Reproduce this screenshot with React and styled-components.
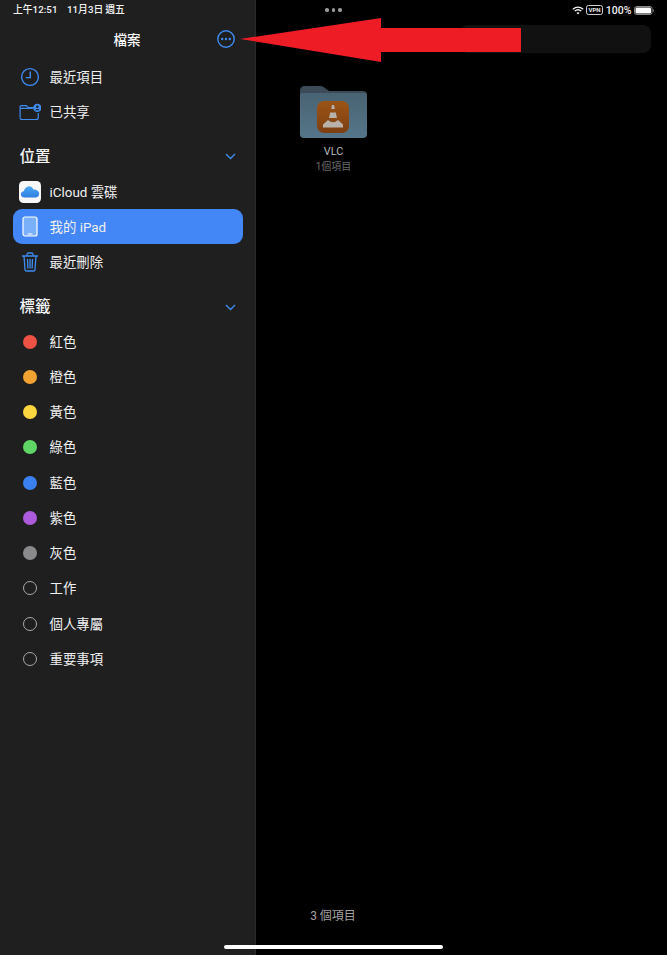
import React from "react";
import styled, { createGlobalStyle } from "styled-components";

const Global = createGlobalStyle`
  html, body { margin: 0; padding: 0; background: #000; }
  * { box-sizing: border-box; }
  body { font-family: Roboto, "Noto Sans CJK TC", sans-serif; color: #fff; }
`;

const Screen = styled.div`
  position: relative;
  width: 667px;
  height: 955px;
  display: grid;
  grid-template-columns: 256px 1fr;
  overflow: hidden;
  background: #000;
`;

const Sidebar = styled.aside`
  background: #1f1f20;
  border-right: 1px solid #2a2a2a;
  display: flex;
  flex-direction: column;
  padding-top: 3px;
`;

const StatusLeft = styled.div`
  height: 14px;
  padding-left: 13px;
  display: flex;
  font-size: 9.8px;
  line-height: 14px;
  font-weight: 500;
  color: #f2f2f2;
  white-space: nowrap;
`;

const StatusItem = styled.span`
  margin-left: ${(p) => p.$gap || 0}px;
`;

const NavBar = styled.div`
  position: relative;
  height: 40px;
  margin-top: 2px;
  display: flex;
  align-items: center;
  justify-content: center;
`;

const NavTitle = styled.div`
  font-size: 13.5px;
  font-weight: 500;
  color: #f5f5f5;
  margin-left: -1px;
`;

const MoreButton = styled.div`
  position: absolute;
  left: 217px;
  top: 11px;
  width: 18px;
  height: 18px;
  display: flex;
`;

const List = styled.div`
  display: flex;
  flex-direction: column;
`;

const Row = styled.div`
  height: 35.25px;
  margin: 0 12px 0 13px;
  padding-left: 6px;
  display: flex;
  align-items: center;
  gap: 8.6px;
  font-size: 13.4px;
  color: #f0f0f0;
  border-radius: 9px;
  background: ${(p) => (p.$active ? "#4287f5" : "transparent")};
`;

const RowLabel = styled.span`
  margin-top: -2px;
`;

const IconSlot = styled.span`
  width: 22px;
  height: 24px;
  flex: none;
  display: flex;
  align-items: center;
  justify-content: center;
`;

const Section = styled.div`
  height: 36px;
  margin: 8.4px 19px 0 20px;
  display: flex;
  align-items: center;
  justify-content: space-between;
  font-size: 15.5px;
  font-weight: 500;
  color: #f5f5f5;
`;

const SectionLabel = styled.span`
  margin-top: -2px;
  margin-left: -0.5px;
`;

const ChevronMark = styled.svg`
  margin-top: 2px;
`;

const Dot = styled.span`
  width: 14px;
  height: 14px;
  border-radius: 50%;
  background: ${(p) => p.$color || "transparent"};
  border: ${(p) => (p.$color ? "none" : "1px solid #a8a8a8")};
`;

const Main = styled.main`
  position: relative;
  display: flex;
  flex-direction: column;
  padding-top: 3px;
`;

const StatusRight = styled.div`
  height: 14px;
  display: flex;
  align-items: center;
  padding-left: 69px;
  padding-right: 13px;
`;

const Dots = styled.div`
  display: flex;
  gap: 3px;
  span {
    width: 3.5px;
    height: 3.5px;
    border-radius: 50%;
    background: #9a9a9a;
  }
`;

const StatusIcons = styled.div`
  margin-left: auto;
  display: flex;
  align-items: center;
  gap: 2.5px;
  font-size: 10.5px;
  font-weight: 500;
  color: #f2f2f2;
`;

const Search = styled.div`
  align-self: flex-end;
  width: 191px;
  height: 28px;
  margin: 8px 16px 0 0;
  background: #111;
  border-radius: 8px;
`;

const FolderCell = styled.div`
  width: 67px;
  margin: 32px 0 0 44px;
  display: flex;
  flex-direction: column;
  align-items: center;
`;

const FolderName = styled.div`
  margin-top: 7px;
  font-size: 10.8px;
  line-height: 14px;
  color: #b8b8b8;
`;

const FolderCount = styled.div`
  font-size: 10px;
  line-height: 15px;
  color: #6a6a6a;
  white-space: nowrap;
`;

const Footer = styled.div`
  margin-top: auto;
  margin-bottom: 31px;
  width: 154px;
  text-align: center;
  font-size: 12px;
  line-height: 16px;
  color: #a0a0a0;
`;

const HomeBar = styled.div`
  position: absolute;
  left: 224px;
  top: 945px;
  width: 219px;
  height: 4px;
  border-radius: 2px;
  background: #fff;
`;

const ArrowMark = styled.svg`
  position: absolute;
  left: 238px;
  top: 16px;
`;

const blue = "#3f8bf0";

const Clock = () => (
  <svg width="20" height="20" viewBox="0 0 20 20" fill="none" stroke={blue} strokeWidth="1.4">
    <circle cx="10" cy="10" r="8.4" />
    <path d="M10.3 4.6V10.6H5.8" />
  </svg>
);

const SharedFolder = () => (
  <svg width="24" height="20" viewBox="0 0 24 20" fill="none">
    <path d="M1.2 16V4.2Q1.2 3 2.4 3H8L10.2 5.2H16" stroke={blue} strokeWidth="1.3" />
    <path d="M1.2 6H15M21 11V16Q21 18.2 19 18.2H3.2Q1.2 18.2 1.2 16" stroke={blue} strokeWidth="1.3" />
    <circle cx="20" cy="5.5" r="4.6" fill={blue} />
    <circle cx="20" cy="4.2" r="1.4" fill="#1f1f20" />
    <path d="M17.4 8.2Q20 5 22.6 8.2Z" fill="#1f1f20" />
  </svg>
);

const ICloud = () => (
  <svg width="24" height="24" viewBox="0 0 24 24">
    <defs>
      <linearGradient id="cloud" x1="0" y1="0" x2="0" y2="1">
        <stop offset="0" stopColor="#4aa8f5" />
        <stop offset="1" stopColor="#2f7fe0" />
      </linearGradient>
    </defs>
    <rect width="24" height="24" rx="5" fill="#f7f7f7" />
    <path
      d="M6 18C3.4 18 2 16.2 2 14.4C2 12.6 3.3 11.2 5.2 11.1C6 8 8.2 5.6 11 5.6C13.2 5.6 15 7 15.8 9.4C19 9.2 22 11.2 22 14C22 16.3 20.2 18 18 18Z"
      fill="url(#cloud)"
    />
  </svg>
);

const Tablet = () => (
  <svg width="16" height="21" viewBox="0 0 16 21">
    <rect x="1" y="1" width="14" height="19" rx="2" fill="#7ab0fa" stroke="#fff" strokeWidth="1.2" />
    <rect x="5.5" y="17.6" width="5" height="1" rx=".5" fill="#fff" />
  </svg>
);

const Trash = () => (
  <svg width="18" height="20" viewBox="0 0 18 20" fill="none" stroke={blue} strokeWidth="1.3">
    <path d="M1 4H17M6 4V2.4Q6 1 7.4 1H10.6Q12 1 12 2.4V4" />
    <path d="M3 4L4 17.6Q4.1 19 5.6 19H12.4Q13.9 19 14 17.6L15 4" />
    <path d="M6.5 7L6.9 16.5M9 7V16.5M11.5 7L11.1 16.5" />
  </svg>
);

const Chevron = () => (
  <ChevronMark width="11" height="7" viewBox="0 0 11 7" fill="none" stroke={blue} strokeWidth="1.4">
    <path d="M1 1L5.5 5.5L10 1" />
  </ChevronMark>
);

const Wifi = () => (
  <svg width="12" height="9" viewBox="0 0 12 9" fill="none" stroke="#f2f2f2" strokeWidth="1.3">
    <path d="M.8 3.2Q6-1 11.2 3.2M2.7 5.1Q6 2.4 9.3 5.1" />
    <path d="M4.4 6.8Q6 5.7 7.6 6.8L6 8.6Z" fill="#f2f2f2" stroke="none" />
  </svg>
);

const Vpn = () => (
  <svg width="17" height="10" viewBox="0 0 17 10">
    <rect x=".5" y=".5" width="16" height="9" rx="2" fill="none" stroke="#e8e8e8" strokeWidth=".9" />
    <text x="8.5" y="7.2" textAnchor="middle" fontSize="6" fontWeight="700" fontFamily="Roboto, sans-serif" fill="#e8e8e8">VPN</text>
  </svg>
);

const Battery = () => (
  <svg width="20" height="9" viewBox="0 0 20 9">
    <rect x=".5" y=".5" width="17.5" height="8" rx="2" fill="none" stroke="#888" />
    <rect x="1.5" y="1.5" width="15.5" height="6" rx="1.2" fill="#fff" />
    <path d="M19 3V6Q20 5.5 20 4.5Q20 3.5 19 3Z" fill="#888" />
  </svg>
);

const Folder = () => (
  <svg width="67" height="53" viewBox="0 0 67 53">
    <defs>
      <linearGradient id="vlc" x1="0" y1="0" x2="0" y2="1">
        <stop offset="0" stopColor="#9c5416" />
        <stop offset="1" stopColor="#7d3f12" />
      </linearGradient>
      <linearGradient id="folderBody" x1="0" y1="0" x2="0" y2="1">
        <stop offset="0" stopColor="#486373" />
        <stop offset="1" stopColor="#557689" />
      </linearGradient>
    </defs>
    <path d="M0 5.5Q0 1 5 1H20Q23 1 25 3L29 6H63Q67 6 67 10V20H0Z" fill="#3c4b57" />
    <path d="M0 11Q0 8 3 8H64Q67 8 67 11V49Q67 53 63 53H4Q0 53 0 49Z" fill="url(#folderBody)" />
    <rect x="17" y="16" width="32" height="32" rx="7" fill="url(#vlc)" />
    <path d="M32 20H34L34.8 24H31.2Z" fill="#b8b2aa" />
    <path d="M30.2 27.5H35.8L37 33H29Z" fill="#b8b2aa" />
    <path d="M28 35L23 39.5V42.5H43V39.5L38 35Q33 39.5 28 35Z" fill="#b8b2aa" />
  </svg>
);

const TopRows = [
  { icon: <Clock />, label: "最近項目" },
  { icon: <SharedFolder />, label: "已共享" },
];

const PlaceRows = [
  { icon: <ICloud />, label: "iCloud 雲碟" },
  { icon: <Tablet />, label: "我的 iPad", active: true },
  { icon: <Trash />, label: "最近刪除" },
];

const Tags = [
  { color: "#ee5244", label: "紅色" },
  { color: "#f1a233", label: "橙色" },
  { color: "#fbd63f", label: "黃色" },
  { color: "#5fd566", label: "綠色" },
  { color: "#3a80f0", label: "藍色" },
  { color: "#ac5bdc", label: "紫色" },
  { color: "#8a8a8d", label: "灰色" },
  { label: "工作" },
  { label: "個人專屬" },
  { label: "重要事項" },
];

export default function App() {
  return (
    <>
      <Global />
      <Screen>
        <Sidebar>
          <StatusLeft>
            <StatusItem>上午12:51</StatusItem>
            <StatusItem $gap={9.5}>11月3日</StatusItem>
            <StatusItem $gap={2}>週五</StatusItem>
          </StatusLeft>
          <NavBar>
            <NavTitle>檔案</NavTitle>
            <MoreButton>
              <svg width="18" height="18" viewBox="0 0 18 18" fill="none">
                <circle cx="9" cy="9" r="8.2" stroke={blue} strokeWidth="1.4" />
                <circle cx="5.2" cy="9" r="1.2" fill={blue} />
                <circle cx="9" cy="9" r="1.2" fill={blue} />
                <circle cx="12.8" cy="9" r="1.2" fill={blue} />
              </svg>
            </MoreButton>
          </NavBar>
          <List>
            {TopRows.map((r) => (
              <Row key={r.label}>
                <IconSlot>{r.icon}</IconSlot>
                <RowLabel>{r.label}</RowLabel>
              </Row>
            ))}
          </List>
          <Section>
            <SectionLabel>位置</SectionLabel>
            <Chevron />
          </Section>
          <List>
            {PlaceRows.map((r) => (
              <Row key={r.label} $active={r.active}>
                <IconSlot>{r.icon}</IconSlot>
                <RowLabel>{r.label}</RowLabel>
              </Row>
            ))}
          </List>
          <Section>
            <SectionLabel>標籤</SectionLabel>
            <Chevron />
          </Section>
          <List>
            {Tags.map((t) => (
              <Row key={t.label}>
                <IconSlot>
                  <Dot $color={t.color} />
                </IconSlot>
                <RowLabel>{t.label}</RowLabel>
              </Row>
            ))}
          </List>
        </Sidebar>
        <Main>
          <StatusRight>
            <Dots>
              <span />
              <span />
              <span />
            </Dots>
            <StatusIcons>
              <Wifi />
              <Vpn />
              100%
              <Battery />
            </StatusIcons>
          </StatusRight>
          <Search />
          <FolderCell>
            <Folder />
            <FolderName>VLC</FolderName>
            <FolderCount>1個項目</FolderCount>
          </FolderCell>
          <Footer>3 個項目</Footer>
        </Main>
        <ArrowMark width="285" height="48" viewBox="0 0 285 48">
          <path d="M2 23L143 2V12H283V36H143V46Z" fill="#ee1c25" />
        </ArrowMark>
        <HomeBar />
      </Screen>
    </>
  );
}
